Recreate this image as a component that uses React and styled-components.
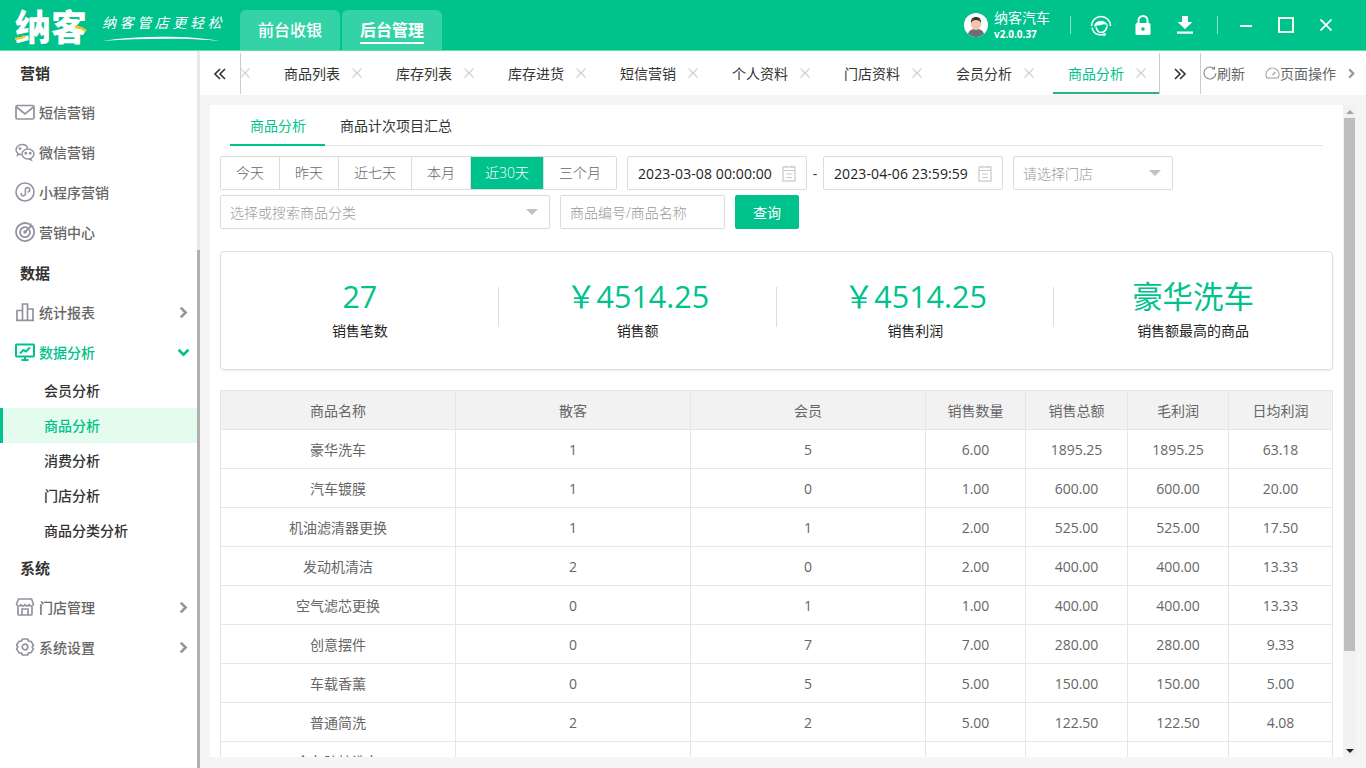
import React from 'react';
import styled, { createGlobalStyle } from 'styled-components';

const GREEN = '#00c28c';

const GlobalStyle = createGlobalStyle`
  html, body {
    margin: 0;
    padding: 0;
    height: 100%;
    overflow: hidden;
    background: #f5f5f5;
    font-family: "Open Sans", "Noto Sans CJK SC", sans-serif;
    font-size: 14px;
  }
  * { box-sizing: border-box; }
`;

const Page = styled.div`
  width: 1366px;
  height: 768px;
  display: flex;
  flex-direction: column;
  overflow: hidden;
`;

const Header = styled.header`
  height: 51px;
  flex: none;
  display: flex;
  background: ${GREEN};
  border-bottom: 1px solid #5fe0a5;
  color: #fff;
`;

const Logo = styled.div`
  width: 240px;
  flex: none;
  display: flex;
  padding-left: 15px;
`;

const LogoMark = styled.div`
  position: relative;
  width: 72px;
  height: 50px;
  font-size: 36px;
  line-height: 50px;
  font-weight: 900;
  white-space: nowrap;
  font-family: "Noto Sans CJK SC", sans-serif;
`;

const LogoAccent = styled.svg`
  position: absolute;
  left: 0;
  top: 0;
`;

const Slogan = styled.div`
  position: relative;
  margin-left: 15px;
  width: 125px;
  height: 50px;
  padding-top: 12px;
  font-family: "Noto Sans CJK SC", sans-serif;
  font-size: 14px;
  line-height: 20px;
  letter-spacing: 3.6px;
  font-style: italic;
  white-space: nowrap;
`;

const SloganSwoosh = styled.svg`
  position: absolute;
  left: 0;
  top: 36px;
`;

const AppTabs = styled.nav`
  display: flex;
  gap: 2px;
  padding-top: 10px;
`;

const AppTab = styled.div`
  width: 100px;
  height: 40px;
  background: #33d3a7;
  border-radius: 6px 6px 0 0;
  display: flex;
  align-items: center;
  justify-content: center;
  font-size: 16px;
  font-weight: ${p => (p.$active ? 700 : 500)};
  span {
    display: block;
    line-height: 24px;
    padding-top: 1px;
    border-bottom: ${p => (p.$active ? '2px solid #fff' : '2px solid transparent')};
  }
`;

const HeaderRight = styled.div`
  margin-left: auto;
  display: flex;
  align-items: center;
`;

const Avatar = styled.svg`
  width: 24px;
  height: 24px;
  flex: none;
`;

const UserInfo = styled.div`
  margin-left: 6px;
  width: 76px;
`;

const UserName = styled.div`
  font-size: 14px;
  line-height: 17px;
  white-space: nowrap;
`;

const Version = styled.div`
  font-size: 10px;
  font-weight: 700;
  line-height: 15px;
  margin-top: 1px;
`;

const HeaderDivider = styled.i`
  display: block;
  width: 1px;
  height: 18px;
  background: rgba(255, 255, 255, 0.55);
`;

const HeaderIcon = styled.div`
  width: 42px;
  height: 50px;
  display: flex;
  align-items: center;
  justify-content: center;
`;

const HeaderIcons = styled.div`
  display: flex;
  margin: 0 11px 0 9px;
`;

const WindowButtons = styled.div`
  display: flex;
  margin: 0 20px 0 8px;
`;

const WindowButton = styled.div`
  width: 40px;
  height: 50px;
  display: flex;
  align-items: center;
  justify-content: center;
`;

const Body = styled.div`
  flex: 1;
  min-height: 0;
  display: flex;
`;

const Sidebar = styled.aside`
  width: 197px;
  flex: none;
  background: #fff;
  padding-top: 1px;
`;

const SideScroll = styled.div`
  width: 3px;
  flex: none;
  background: #e8e8e8;
  padding-top: 199px;
  &::after {
    content: '';
    display: block;
    height: 100%;
    background: #b0b0b0;
  }
`;

const SideTitle = styled.div`
  height: 40px;
  padding-left: 20px;
  display: flex;
  align-items: center;
  color: #333;
  font-size: 15px;
  font-weight: 700;
`;

const SideItem = styled.div`
  height: 40px;
  padding: 0 7px 0 15px;
  display: flex;
  align-items: center;
  color: ${p => (p.$active ? GREEN : '#666')};
  font-size: 14px;
  font-weight: 500;
  svg { flex: none; }
  span { margin-left: 4px; flex: 1; }
`;

const SubMenu = styled.div`
  padding-top: 1px;
  margin-bottom: -1px;
`;

const SubItem = styled.div`
  height: 35px;
  padding-left: ${p => (p.$active ? '41px' : '44px')};
  padding-bottom: 2px;
  display: flex;
  align-items: center;
  color: ${p => (p.$active ? GREEN : '#333')};
  background: ${p => (p.$active ? '#e3fced' : 'transparent')};
  border-left: ${p => (p.$active ? `3px solid ${GREEN}` : 'none')};
  font-size: 14px;
  font-weight: 500;
`;

const Main = styled.main`
  flex: 1;
  min-width: 0;
  display: flex;
  flex-direction: column;
`;

const TabBar = styled.div`
  height: 44px;
  flex: none;
  display: flex;
  background: #fff;
`;

const PagerButton = styled.div`
  width: 41px;
  flex: none;
  margin: 2px 0 1px;
  display: flex;
  align-items: center;
  justify-content: center;
  border-right: 1px solid #ccc;
  color: #333;
`;

const TabStrip = styled.div`
  flex: 1;
  min-width: 0;
  display: flex;
  justify-content: flex-end;
  overflow: hidden;
  border-right: 1px solid #ccc;
  margin-top: 2px;
  height: 41px;
`;

const PageTab = styled.div`
  width: ${p => (p.$active ? '106px' : '112px')};
  flex: none;
  height: 41px;
  padding-left: 15px;
  display: flex;
  align-items: center;
  color: ${p => (p.$active ? GREEN : '#333')};
  border-bottom: 2px solid ${p => (p.$active ? '#2eb27c' : 'transparent')};
  font-size: 14px;
  white-space: nowrap;
  span { width: 56px; }
  svg { margin-left: 11px; }
`;

const TabTools = styled.div`
  width: 165px;
  flex: none;
  display: flex;
  align-items: center;
  padding-left: 2px;
  color: #666;
  font-size: 14px;
  white-space: nowrap;
`;

const ToolItem = styled.div`
  display: flex;
  align-items: center;
  margin-right: ${p => p.$gap || 0}px;
`;

const Content = styled.div`
  flex: 1;
  min-height: 0;
  padding: 10px 10px 11px;
`;

const Panel = styled.section`
  height: 100%;
  display: flex;
  background: #fff;
`;

const PanelBody = styled.div`
  flex: 1;
  min-width: 0;
  overflow: hidden;
  padding: 0 10px;
`;

const Scrollbar = styled.div`
  width: 13px;
  flex: none;
  display: flex;
  flex-direction: column;
  background: #f1f1f1;
`;

const ScrollArrow = styled.div`
  height: 13px;
  flex: none;
  display: flex;
  align-items: center;
  justify-content: center;
  &::before {
    content: '';
    border-left: 4px solid transparent;
    border-right: 4px solid transparent;
    ${p => (p.$down ? 'border-top: 4px solid #222;' : 'border-bottom: 4px solid #a3a3a3;')}
  }
`;

const ScrollTrack = styled.div`
  flex: 1;
  min-height: 0;
`;

const ScrollThumb = styled.div`
  height: 533px;
  margin: 0 1px;
  background: #bdbdbd;
`;

const SubTabs = styled.div`
  height: 41px;
  margin: 0 10px;
  display: flex;
  border-bottom: 1px solid #e6e6e6;
`;

const SubTab = styled.div`
  height: 41px;
  padding: 0 ${p => (p.$active ? '19px 0 20px' : '15px')};
  line-height: 42px;
  font-size: 14px;
  color: ${p => (p.$active ? GREEN : '#333')};
  border-bottom: ${p => (p.$active ? `2px solid ${GREEN}` : 'none')};
`;

const FilterRow = styled.div`
  display: flex;
  align-items: center;
  height: 34px;
  margin-top: ${p => p.$top}px;
`;

const RangeGroup = styled.div`
  display: flex;
  height: 34px;
  border: 1px solid #dcdcdc;
  border-radius: 2px;
`;

const RangeButton = styled.div`
  width: ${p => p.$w}px;
  padding-bottom: 2px;
  display: flex;
  align-items: center;
  justify-content: center;
  font-size: 14px;
  font-weight: 300;
  color: ${p => (p.$active ? '#fff' : '#666')};
  background: ${p => (p.$active ? GREEN : '#fff')};
  & + & { border-left: 1px solid #dcdcdc; }
`;

const Field = styled.div`
  width: ${p => p.$w}px;
  height: 34px;
  margin-left: ${p => p.$left || 0}px;
  padding: 0 10px 0 ${p => (p.$value ? '10px' : '9px')};
  display: flex;
  align-items: center;
  justify-content: space-between;
  border: 1px solid #dcdcdc;
  border-radius: 2px;
  background: #fff;
  font-size: 14px;
  font-weight: ${p => (p.$value ? 400 : 300)};
  letter-spacing: ${p => (p.$value ? '0.1px' : '0')};
  color: ${p => (p.$value ? '#222' : '#999')};
  white-space: nowrap;
`;

const Caret = styled.i`
  display: block;
  margin-right: 1px;
  border-left: 6px solid transparent;
  border-right: 6px solid transparent;
  border-top: 6px solid #c2c2c2;
`;

const Dash = styled.span`
  width: 16px;
  text-align: center;
  color: #333;
`;

const QueryButton = styled.div`
  width: 64px;
  height: 34px;
  margin-left: 10px;
  display: flex;
  align-items: center;
  justify-content: center;
  border-radius: 2px;
  background: ${GREEN};
  color: #fff;
  font-size: 14px;
`;

const StatsCard = styled.div`
  height: 119px;
  margin-top: 22px;
  display: grid;
  grid-template-columns: repeat(4, 1fr);
  align-items: center;
  border: 1px solid #dedede;
  border-radius: 4px;
  box-shadow: 0 1px 2px rgba(0, 0, 0, 0.08);
`;

const Stat = styled.div`
  position: relative;
  height: 117px;
  padding-top: 24px;
  text-align: center;
  & + &::before {
    content: '';
    position: absolute;
    left: -1px;
    top: 35px;
    height: 40px;
    border-left: 1px solid #ddd;
  }
`;

const StatValue = styled.div`
  color: ${GREEN};
  font-size: 30.5px;
  line-height: 40px;
`;

const StatLabel = styled.div`
  margin-top: 1px;
  font-size: 14px;
  line-height: 28px;
  color: #222;
`;

const Table = styled.table`
  width: 1112px;
  margin-top: 20px;
  border-collapse: collapse;
  table-layout: fixed;
`;

const HeadCell = styled.th`
  height: 39px;
  padding: 0;
  border: 1px solid #e6e6e6;
  background: #f2f2f2;
  color: #666;
  font-size: 14px;
  font-weight: 400;
  text-align: center;
`;

const Cell = styled.td`
  height: 39px;
  padding: 0;
  border: 1px solid #e6e6e6;
  color: #666;
  font-size: 14px;
  text-align: center;
`;

const ICON = '#93939f';

const MailIcon = () => (
  <svg width="20" height="20" viewBox="0 0 20 20" fill="none" stroke={ICON} strokeWidth="1.7">
    <rect x="1" y="3.500" width="18" height="13.500" rx="1.500" />
    <path d="M1.500 5l8.500 7 8.500-7" />
  </svg>
);

const WechatIcon = () => (
  <svg width="20" height="20" viewBox="0 0 20 20" fill="none" stroke={ICON} strokeWidth="1.500">
    <path d="M12.500 6.400C12 3.900 9.800 2.600 7.300 2.600 4 2.600 1 4.700 1 7.700c0 1.600.9 2.900 2 3.800l-.5 1.700 2-1c.7.2 1.300.3 2 .3" />
    <ellipse cx="13" cy="12" rx="6" ry="5" />
    <path d="M15.500 16.200l.8 1.800-2.300-1" />
    <circle cx="10.800" cy="11.300" r=".7" fill={ICON} />
    <circle cx="15.200" cy="11.300" r=".7" fill={ICON} />
    <circle cx="5" cy="6.600" r=".7" fill={ICON} />
  </svg>
);

const MiniIcon = () => (
  <svg width="20" height="20" viewBox="0 0 20 20" fill="none" stroke={ICON} strokeWidth="1.600">
    <circle cx="10" cy="10" r="9" />
    <path d="M6.200 11.500v.2a2.200 2.200 0 0 0 4.200.8V7.600a2.200 2.200 0 1 1 2.800 2.300" strokeLinecap="round" />
  </svg>
);

const TargetIcon = () => (
  <svg width="20" height="20" viewBox="0 0 20 20" fill="none" stroke={ICON} strokeWidth="1.800">
    <path d="M14.800 2.400A9 9 0 1 0 17.700 5.300" />
    <path d="M12.700 6A5 5 0 1 0 14.200 7.500" />
    <circle cx="10" cy="10" r="1.800" fill={ICON} stroke="none" />
    <path d="M10 10l7-7M15.500 1.500v3h3" />
  </svg>
);

const BarsIcon = () => (
  <svg width="20" height="20" viewBox="0 0 20 20" fill="none" stroke={ICON} strokeWidth="1.700">
    <path d="M2 18V8.500h5.500V18M7.500 18V2h5v16M12.500 18V7H18v11M1 18.300h18" />
  </svg>
);

const MonitorIcon = () => (
  <svg width="20" height="20" viewBox="0 0 20 20" fill="none" stroke={GREEN} strokeWidth="2">
    <rect x="1" y="2.500" width="18" height="12" rx=".8" />
    <path d="M6.500 18h7M10 14.500V18M5 11.500l3.500-3.500 2.500 1.500 4-4" />
  </svg>
);

const StoreIcon = () => (
  <svg width="20" height="20" viewBox="0 0 20 20" fill="none" stroke={ICON} strokeWidth="1.700">
    <path d="M3.500 2h13l2 5a2.300 2.300 0 0 1-4.300.8 2.500 2.500 0 0 1-4.200 0 2.500 2.500 0 0 1-4.200 0A2.300 2.300 0 0 1 1.500 7z" />
    <path d="M3 9.500V17a1 1 0 0 0 1 1h12a1 1 0 0 0 1-1V9.500M7 18v-6h6v6" />
  </svg>
);

const GearIcon = () => (
  <svg width="20" height="20" viewBox="0 0 20 20" fill="none" stroke={ICON} strokeWidth="1.700">
    <path d="M7.500 2h5l1 2 2.500.4 2.400 3.600-1.200 2 1.200 2-2.400 3.600-2.500.4-1 2h-5l-1-2-2.500-.4L1.600 12l1.200-2-1.200-2L4 4.400 6.500 4z" strokeLinejoin="round" />
    <circle cx="10" cy="10" r="2.800" />
  </svg>
);

const Chevron = ({ down, color = ICON, size = 13 }) => (
  <svg width={size} height={size} viewBox="0 0 12 12" fill="none" stroke={color} strokeWidth="2.400">
    <path d={down ? 'M1.500 3.500L6 8l4.500-4.500' : 'M3.500 1.500L8 6l-4.500 4.500'} />
  </svg>
);

const DoubleChevron = ({ left }) => (
  <svg width="14" height="14" viewBox="0 0 14 14" fill="none" stroke="#333" strokeWidth="1.600">
    <path d={left ? 'M7 2L2 7l5 5M12 2L7 7l5 5' : 'M2 2l5 5-5 5M7 2l5 5-5 5'} />
  </svg>
);

const CloseMark = () => (
  <svg width="12" height="12" viewBox="0 0 12 12" fill="none" stroke="#cfcfcf" strokeWidth="1.100">
    <path d="M1.500 1.500l9 9M10.500 1.500l-9 9" />
  </svg>
);

const CalendarIcon = () => (
  <svg width="14" height="17" viewBox="0 0 14 17" fill="none" stroke="#c8c8c8" strokeWidth="1.200">
    <rect x="1" y="2" width="12" height="14" />
    <path d="M1 5.500h12M4 9h6M4 12.500h6M4 .5v2M10 .5v2" />
  </svg>
);

const menuTop = [
  { label: '短信营销', Icon: MailIcon },
  { label: '微信营销', Icon: WechatIcon },
  { label: '小程序营销', Icon: MiniIcon },
  { label: '营销中心', Icon: TargetIcon },
];

const subMenu = ['会员分析', '商品分析', '消费分析', '门店分析', '商品分类分析'];

// the first tab is scrolled away, only its close mark still shows
const pageTabs = ['', '商品列表', '库存列表', '库存进货', '短信营销', '个人资料', '门店资料', '会员分析', '商品分析'];

const ranges = [
  { label: '今天', w: 58 },
  { label: '昨天', w: 59 },
  { label: '近七天', w: 73 },
  { label: '本月', w: 59 },
  { label: '近30天', w: 73, active: true },
  { label: '三个月', w: 73 },
];

const stats = [
  { value: '27', label: '销售笔数' },
  { value: '￥4514.25', label: '销售额' },
  { value: '￥4514.25', label: '销售利润' },
  { value: '豪华洗车', label: '销售额最高的商品' },
];

const columns = [
  { title: '商品名称', w: 235 },
  { title: '散客', w: 235 },
  { title: '会员', w: 235 },
  { title: '销售数量', w: 100 },
  { title: '销售总额', w: 102 },
  { title: '毛利润', w: 101 },
  { title: '日均利润', w: 104 },
];

const rows = [
  ['豪华洗车', '1', '5', '6.00', '1895.25', '1895.25', '63.18'],
  ['汽车镀膜', '1', '0', '1.00', '600.00', '600.00', '20.00'],
  ['机油滤清器更换', '1', '1', '2.00', '525.00', '525.00', '17.50'],
  ['发动机清洁', '2', '0', '2.00', '400.00', '400.00', '13.33'],
  ['空气滤芯更换', '0', '1', '1.00', '400.00', '400.00', '13.33'],
  ['创意摆件', '0', '7', '7.00', '280.00', '280.00', '9.33'],
  ['车载香薰', '0', '5', '5.00', '150.00', '150.00', '5.00'],
  ['普通简洗', '2', '2', '5.00', '122.50', '122.50', '4.08'],
  ['全车防护洗车', '0', '3', '3.00', '90.00', '90.00', '3.07'],
];

export default function App() {
  return (
    <>
      <GlobalStyle />
      <Page>
        <Header>
          <Logo>
            <LogoMark>
              纳客
              <LogoAccent width="72" height="50" viewBox="0 0 72 50" fill="none" stroke="#f5c518" strokeWidth="2.500">
                <path d="M0 39c4 0 7-1 10-3" />
                <path d="M60 27c4 0 8 1 10 4" />
              </LogoAccent>
            </LogoMark>
            <Slogan>
              纳客管店更轻松
              <SloganSwoosh width="120" height="6" viewBox="0 0 120 6" fill="#fff">
                <path d="M0 5C40 -1 90 0 118 5 90 2 40 2 0 5z" />
              </SloganSwoosh>
            </Slogan>
          </Logo>
          <AppTabs>
            <AppTab><span>前台收银</span></AppTab>
            <AppTab $active><span>后台管理</span></AppTab>
          </AppTabs>
          <HeaderRight>
            <Avatar viewBox="0 0 24 24">
              <circle cx="12" cy="12" r="12" fill="#fff" />
              <path d="M4 21c1-4 4-5 8-5s7 1 8 5a12 12 0 0 1-16 0z" fill="#6d6f78" />
              <ellipse cx="12" cy="11" rx="5" ry="6" fill="#f3c5a5" />
              <path d="M7 10c-.5-4 2-6 5-6s5.500 2 5 6c-1-2-2-3-5-3s-4 1-5 3z" fill="#333" />
            </Avatar>
            <UserInfo>
              <UserName>纳客汽车</UserName>
              <Version>v2.0.0.37</Version>
            </UserInfo>
            <HeaderDivider />
            <HeaderIcons>
              <HeaderIcon>
                <svg width="22" height="22" viewBox="0 0 22 22" fill="none" stroke="#fff">
                  <path d="M1.500 12a9.500 9.500 0 0 1 19 0" strokeWidth="1.600" />
                  <path d="M4.500 12.500C4 5.500 18 5.500 17.500 12.500 16.500 10 15 9.500 12 10.500 9 11.500 6 11 4.500 12.500z" fill="#fff" strokeWidth=".5" />
                  <path d="M6 13c1 4 3 5.500 5 5.500 3 0 5-2 6-6" strokeWidth="1.500" />
                  <path d="M2 13.500c.5 3.500 3 6.500 7 7.200h5" strokeWidth="1.500" />
                  <circle cx="14.500" cy="20.500" r="1.400" fill="#fff" stroke="none" />
                </svg>
              </HeaderIcon>
              <HeaderIcon>
                <svg width="18" height="22" viewBox="0 0 18 22" fill="none">
                  <path d="M4.500 10V6.500a4.500 4.500 0 0 1 9 0V10" stroke="#fff" strokeWidth="2" />
                  <rect x="1.500" y="9" width="15" height="12" rx="1.500" fill="#fff" />
                  <circle cx="9" cy="15" r="1.800" fill={GREEN} />
                </svg>
              </HeaderIcon>
              <HeaderIcon>
                <svg width="18" height="20" viewBox="0 0 18 20" fill="#fff">
                  <path d="M6 1h6v6h4.500L9 14 1.500 7H6z" />
                  <rect x="1" y="16.500" width="16" height="2.200" />
                </svg>
              </HeaderIcon>
            </HeaderIcons>
            <HeaderDivider />
            <WindowButtons>
              <WindowButton>
                <svg width="12" height="12" viewBox="0 0 12 12"><rect y="6" width="12" height="2" fill="#fff" /></svg>
              </WindowButton>
              <WindowButton>
                <svg width="16" height="16" viewBox="0 0 16 16" fill="none"><rect x="1" y="1" width="14" height="14" stroke="#f4fbe8" strokeWidth="2" /></svg>
              </WindowButton>
              <WindowButton>
                <svg width="12" height="12" viewBox="0 0 12 12" fill="none" stroke="#fff" strokeWidth="1.800"><path d="M.5.5l11 11M11.500.5l-11 11" /></svg>
              </WindowButton>
            </WindowButtons>
          </HeaderRight>
        </Header>
        <Body>
          <Sidebar>
            <SideTitle>营销</SideTitle>
            {menuTop.map(({ label, Icon }) => (
              <SideItem key={label}><Icon /><span>{label}</span></SideItem>
            ))}
            <SideTitle>数据</SideTitle>
            <SideItem><BarsIcon /><span>统计报表</span><Chevron /></SideItem>
            <SideItem $active><MonitorIcon /><span>数据分析</span><Chevron down color={GREEN} /></SideItem>
            <SubMenu>
              {subMenu.map(label => (
                <SubItem key={label} $active={label === '商品分析'}>{label}</SubItem>
              ))}
            </SubMenu>
            <SideTitle>系统</SideTitle>
            <SideItem><StoreIcon /><span>门店管理</span><Chevron /></SideItem>
            <SideItem><GearIcon /><span>系统设置</span><Chevron /></SideItem>
          </Sidebar>
          <SideScroll />
          <Main>
            <TabBar>
              <PagerButton><DoubleChevron left /></PagerButton>
              <TabStrip>
                {pageTabs.map((tab, idx) => (
                  <PageTab key={idx} $active={idx === pageTabs.length - 1}>
                    <span>{tab}</span>
                    <CloseMark />
                  </PageTab>
                ))}
              </TabStrip>
              <PagerButton><DoubleChevron /></PagerButton>
              <TabTools>
                <ToolItem $gap={20}>
                  <svg width="14" height="14" viewBox="0 0 14 14" fill="none" stroke="#888" strokeWidth="1.100">
                    <path d="M11.500 3A6 6 0 1 0 13 7M11.500.5V3H9" />
                  </svg>
                  刷新
                </ToolItem>
                <ToolItem $gap={10}>
                  <svg width="15" height="14" viewBox="0 0 15 14" fill="none" stroke="#999" strokeWidth="1.100">
                    <path d="M2 12a6.500 6.500 0 1 1 11 0zM7.500 9l3-3" />
                  </svg>
                  页面操作
                </ToolItem>
                <Chevron color="#999" size={11} />
              </TabTools>
            </TabBar>
            <Content>
              <Panel>
                <PanelBody>
                  <SubTabs>
                    <SubTab $active>商品分析</SubTab>
                    <SubTab>商品计次项目汇总</SubTab>
                  </SubTabs>
                  <FilterRow $top={10}>
                    <RangeGroup>
                      {ranges.map(r => (
                        <RangeButton key={r.label} $w={r.w} $active={r.active}>{r.label}</RangeButton>
                      ))}
                    </RangeGroup>
                    <Field $w={180} $left={10} $value>2023-03-08 00:00:00<CalendarIcon /></Field>
                    <Dash>-</Dash>
                    <Field $w={180} $value>2023-04-06 23:59:59<CalendarIcon /></Field>
                    <Field $w={160} $left={10}>请选择门店<Caret /></Field>
                  </FilterRow>
                  <FilterRow $top={5}>
                    <Field $w={330}>选择或搜索商品分类<Caret /></Field>
                    <Field $w={165} $left={10}>商品编号/商品名称</Field>
                    <QueryButton>查询</QueryButton>
                  </FilterRow>
                  <StatsCard>
                    {stats.map(s => (
                      <Stat key={s.label}>
                        <StatValue>{s.value}</StatValue>
                        <StatLabel>{s.label}</StatLabel>
                      </Stat>
                    ))}
                  </StatsCard>
                  <Table>
                    <colgroup>
                      {columns.map(c => <col key={c.title} width={c.w} />)}
                    </colgroup>
                    <thead>
                      <tr>{columns.map(c => <HeadCell key={c.title}>{c.title}</HeadCell>)}</tr>
                    </thead>
                    <tbody>
                      {rows.map(row => (
                        <tr key={row[0]}>
                          {row.map((cell, idx) => <Cell key={idx}>{cell}</Cell>)}
                        </tr>
                      ))}
                    </tbody>
                  </Table>
                </PanelBody>
                <Scrollbar>
                  <ScrollArrow />
                  <ScrollTrack><ScrollThumb /></ScrollTrack>
                  <ScrollArrow $down />
                </Scrollbar>
              </Panel>
            </Content>
          </Main>
        </Body>
      </Page>
    </>
  );
}
